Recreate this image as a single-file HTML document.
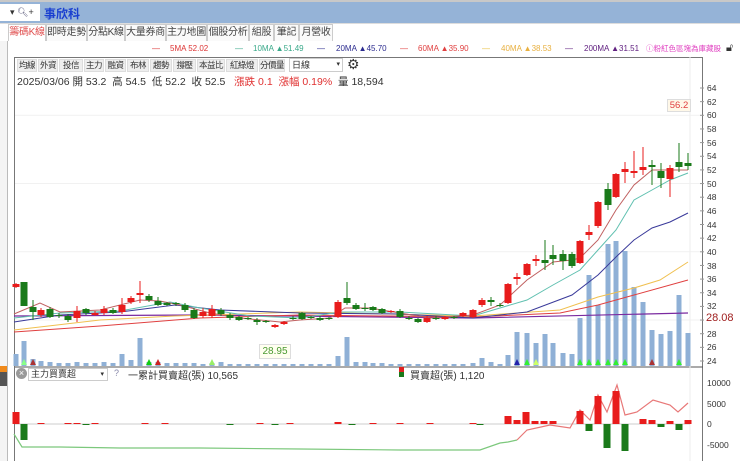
<!DOCTYPE html>
<html><head><meta charset="utf-8"><style>
*{margin:0;padding:0;box-sizing:border-box}
body{width:740px;height:461px;overflow:hidden;background:#fff;font-family:"Liberation Sans","Noto Sans CJK TC",sans-serif;position:relative;font-size:11px;color:#333}
.abs{position:absolute;white-space:nowrap}
.tab{position:absolute;top:24px;height:17px;border:1px solid #ccc;border-bottom:none;background:#fafafa;font-size:10px;line-height:16px;text-align:center;color:#444;white-space:nowrap;overflow:hidden;letter-spacing:-0.3px}
.btn{position:absolute;top:59px;height:13px;background:#eee;border:1px solid #ddd;font-size:8.5px;line-height:11px;text-align:center;color:#333;white-space:nowrap;overflow:hidden;letter-spacing:-0.5px}
.ax{position:absolute;left:707px;font-size:8.5px;color:#333}
.lg{position:absolute;top:44px;font-size:8px;white-space:nowrap}
</style></head><body>
<div class="abs" style="left:0;top:0;width:740px;height:2px;background:#c8c8c8"></div>
<div class="abs" style="left:0;top:2px;width:740px;height:21px;background:#95b3d7"></div>
<div class="abs" style="left:0;top:4px;width:40px;height:17px;background:#fff;font-size:9px;line-height:17px;padding-left:10px">▾ <span style="color:#557">🔍︎</span>+</div>
<div class="abs" style="left:44px;top:5px;font-size:12px;font-weight:bold;color:#1a3fd0">事欣科</div>
<div class="abs" style="left:0;top:23px;width:740px;height:1px;background:#ddd"></div>
<div class="tab" style="left:8px;width:38px;color:#e05050;background:#fff">籌碼K線</div>
<div class="tab" style="left:46px;width:41px">即時走勢</div>
<div class="tab" style="left:87px;width:38px">分點K線</div>
<div class="tab" style="left:125px;width:41px">大量券商</div>
<div class="tab" style="left:166px;width:41px">主力地圖</div>
<div class="tab" style="left:207px;width:42px">個股分析</div>
<div class="tab" style="left:249px;width:25px">組股</div>
<div class="tab" style="left:274px;width:25px">筆記</div>
<div class="tab" style="left:299px;width:34px">月營收</div>
<div class="abs" style="left:0;top:41px;width:8px;height:420px;border-right:1px solid #bbb;background:#f4f4f4"></div>
<div class="abs" style="left:0;top:366px;width:7px;height:6px;background:#f08a1c"></div>
<div class="abs" style="left:0;top:372px;width:7px;height:14px;background:#555"></div>
<div class="lg" style="left:152px;color:#d33">—</div><div class="lg" style="left:170px;color:#d33">5MA 52.02</div>
<div class="lg" style="left:235px;color:#3aa98a">—</div><div class="lg" style="left:253px;color:#3aa98a">10MA ▲51.49</div>
<div class="lg" style="left:317px;color:#2b2b8f">—</div><div class="lg" style="left:336px;color:#2b2b8f">20MA ▲45.70</div>
<div class="lg" style="left:400px;color:#e04040">—</div><div class="lg" style="left:418px;color:#e04040">60MA ▲35.90</div>
<div class="lg" style="left:482px;color:#e8c040">—</div><div class="lg" style="left:501px;color:#e8b040">40MA ▲38.53</div>
<div class="lg" style="left:565px;color:#602080">—</div><div class="lg" style="left:584px;color:#602080">200MA ▲31.51</div>
<div class="lg" style="left:646px;top:43px;font-size:7.5px;color:#e040c0">ⓘ粉紅色區塊為庫藏股</div>
<div class="abs" style="top:42px;left:726px;font-size:11px">🔓︎</div>
<div class="abs" style="left:14px;top:57px;width:689px;height:404px;border:1px solid #777;border-bottom:none"></div>
<div class="btn" style="left:17px;width:20px">均線</div>
<div class="btn" style="left:38px;width:20px">外資</div>
<div class="btn" style="left:59px;width:24px">投信</div>
<div class="btn" style="left:84px;width:20px">主力</div>
<div class="btn" style="left:105px;width:21px">融資</div>
<div class="btn" style="left:127px;width:22px">布林</div>
<div class="btn" style="left:150px;width:22px">趨勢</div>
<div class="btn" style="left:173px;width:23px">撐壓</div>
<div class="btn" style="left:197px;width:28px">本益比</div>
<div class="btn" style="left:226px;width:32px">紅綠燈</div>
<div class="btn" style="left:259px;width:26px">分價量</div>
<div class="abs" style="left:289px;top:58px;width:54px;height:14px;border:1px solid #ccc;font-size:9px;line-height:12px;padding-left:2px">日線<span style="float:right;font-size:7px;padding-right:2px">▾</span></div>
<div class="abs" style="left:347px;top:56px;font-size:14px;color:#333">⚙</div>
<div class="abs" style="left:17px;top:74px;font-size:10.5px;white-space:nowrap;color:#333">2025/03/06 開 53.2 &nbsp;高 54.5 &nbsp;低 52.2 &nbsp;收 52.5 &nbsp; <span style="color:#e03030">漲跌 0.1 &nbsp;漲幅 0.19%</span> &nbsp;量 18,594</div>
<svg class="abs" style="left:0;top:0" width="740" height="461" id="sv"></svg>
<div class="abs" style="left:667px;top:99px;width:24px;height:13px;border:1px solid #ddd;background:#fff8e8;color:#e04040;font-size:9.5px;text-align:center;line-height:12px">56.2</div>
<div class="abs" style="left:259px;top:344px;width:32px;height:15px;border:1px solid #ddd;background:#fffff0;color:#4a9a30;font-size:10px;text-align:center;line-height:14px">28.95</div>
<div class="abs" style="left:706px;top:312px;font-size:11px;color:#a02020">28.08</div>
<div class="abs" style="left:16px;top:368px;width:11px;height:11px;border-radius:50%;background:#999;color:#fff;font-size:9px;line-height:11px;text-align:center">×</div>
<div class="abs" style="left:28px;top:368px;width:80px;height:13px;border:1px solid #ccc;font-size:9px;line-height:11px;padding-left:2px">主力買賣超<span style="float:right;font-size:7px;padding-right:3px">▾</span></div>
<div class="abs" style="left:114px;top:368px;font-size:9px;color:#88a">?</div>
<div class="abs" style="left:128px;top:367px;font-size:10px;white-space:nowrap">一累計買賣超(張) 10,565</div>
<div class="abs" style="left:399px;top:367px;width:5px;height:5px;background:#e02020"></div>
<div class="abs" style="left:399px;top:372px;width:5px;height:5px;background:#1a7a1a"></div>
<div class="abs" style="left:410px;top:367px;font-size:10px;white-space:nowrap">買賣超(張) 1,120</div>
<div class="ax" style="top:83px">64</div><div class="ax" style="top:97px">62</div><div class="ax" style="top:110px">60</div><div class="ax" style="top:124px">58</div><div class="ax" style="top:138px">56</div><div class="ax" style="top:151px">54</div><div class="ax" style="top:165px">52</div><div class="ax" style="top:179px">50</div><div class="ax" style="top:192px">48</div><div class="ax" style="top:206px">46</div><div class="ax" style="top:220px">44</div><div class="ax" style="top:233px">42</div><div class="ax" style="top:247px">40</div><div class="ax" style="top:261px">38</div><div class="ax" style="top:274px">36</div><div class="ax" style="top:288px">34</div><div class="ax" style="top:301px">32</div><div class="ax" style="top:329px">28</div><div class="ax" style="top:342px">26</div><div class="ax" style="top:356px">24</div>
<div class="ax" style="top:378px">10000</div><div class="ax" style="top:399px">5000</div><div class="ax" style="top:419px">0</div><div class="ax" style="top:440px">-5000</div>
<script>
var s='';
function L(x1,y1,x2,y2,c,w){s+='<line x1="'+x1+'" y1="'+y1+'" x2="'+x2+'" y2="'+y2+'" stroke="'+c+'" stroke-width="'+(w||1)+'"/>';}
function R(x,y,w,h,c){s+='<rect x="'+x+'" y="'+y+'" width="'+w+'" height="'+Math.max(h,1)+'" fill="'+c+'"/>';}
function P(pts,c,w){s+='<polyline fill="none" stroke="'+c+'" stroke-width="'+(w||1)+'" points="'+pts+'"/>';}
for(var p=24;p<=64;p+=2){var y=88+(64-p)*6.825;if(p%10==0)L(15,y,700,y,'#f1f1f1');L(700,y,704,y,'#999');}
L(15,367,703,367,'#555');
L(690,57,690,461,'#eee');
L(15,424,690,424,'#ccc');
var vol=[[16,354],[24,341],[33,359],[41,361],[50,362],[59,363],[68,363],[77,362],[86,363],[95,363],[104,362],[113,363],[122,354],[131,360],[140,338],[149,362],[158,362],[167,363],[176,363],[185,363],[194,363],[203,364],[212,363],[221,362],[230,364],[239,364],[248,364],[257,364],[266,364],[275,364],[284,364],[293,364],[302,364],[311,364],[320,364],[329,364],[338,356],[347,337],[356,362],[365,362],[373,363],[382,363],[391,364],[400,364],[409,364],[418,364],[427,364],[436,364],[445,364],[454,364],[463,364],[473,363],[482,358],[491,362],[500,364],[508,355],[517,332],[527,333],[536,343],[545,334],[553,343],[563,353],[572,354],[580,318],[589,275],[598,305],[608,244],[616,241],[625,251],[634,287],[643,302],[652,330],[661,334],[670,331],[679,295],[688,333]];
vol.forEach(function(v){R(v[0]-2.5,v[1],5,366-v[1],'#8fb0d6');});
[[24,'#8f8'],[33,'#a33'],[149,'#1c1'],[158,'#c22'],[212,'#9e6'],[517,'#22a'],[527,'#3e3'],[536,'#cf6'],[580,'#3e3'],[589,'#3e3'],[598,'#3e3'],[608,'#3e3'],[616,'#3e3'],[625,'#3e3'],[652,'#a33'],[679,'#3e3']].forEach(function(t){s+='<polygon points="'+(t[0]-3)+',365 '+(t[0]+3)+',365 '+t[0]+',359" fill="'+t[1]+'"/>';});
P('14,316 200,315 473,318 688,313','#7a2aa0',1.2);
P('14,332 100,326 200,318 300,315 473,317 560,313 598,305 634,295 688,280','#e04040');
P('14,330 100,320 175,316 300,312 473,316 560,310 598,297 634,288 660,280 688,262','#f0c050');
P('14,322 60,315 120,312 175,305 220,310 300,313 400,314 473,318 527,312 572,295 598,275 616,257 634,240 652,228 670,222 688,213','#3a3a9a');
P('14,318 60,313 120,311 170,302 200,308 250,316 300,318 340,312 400,312 473,316 527,300 553,285 580,270 598,250 616,230 634,200 652,190 670,180 688,173','#60c0b0');
P('14,314 40,303 60,312 100,310 140,300 160,301 180,305 210,313 240,318 280,322 300,320 330,318 345,308 370,308 400,313 430,318 473,315 500,305 527,280 553,262 572,260 580,258 598,240 616,210 634,185 652,170 670,170 688,170','#c06060');
var G='#1a7a1a',Rd='#e81c1c';
var c=[[16,284,287,283,288,Rd],[24,282,306,282,306,G],[33,307,312,300,320,G],[41,310,315,308,317,Rd],[50,309,317,307,318,G],[59,315,316,313,318,G],[68,316,320,314,322,G],[77,311,318,306,322,Rd],[86,309,313,308,315,G],[95,313,315,311,316,Rd],[104,309,313,306,315,Rd],[113,310,313,308,314,G],[122,305,312,298,314,Rd],[131,298,302,296,304,Rd],[140,293,295,281,303,Rd],[149,296,300,294,302,G],[158,301,305,297,306,G],[167,303,305,302,306,G],[176,303,304,302,306,G],[185,305,310,303,312,G],[194,310,318,308,319,G],[203,312,316,308,318,Rd],[212,309,316,305,318,Rd],[221,310,314,308,316,G],[230,315,318,313,320,G],[239,317,320,316,321,G],[248,318,319,317,320,G],[257,320,322,318,325,G],[266,321,322,320,323,G],[275,325,327,324,328,Rd],[284,322,324,321,325,Rd],[293,318,319,316,320,G],[302,313,319,312,320,G],[311,317,318,316,319,G],[320,318,320,316,321,G],[329,318,319,317,320,G],[338,302,317,300,318,Rd],[347,298,303,282,305,G],[356,305,309,303,310,G],[365,308,309,303,311,G],[373,307,310,306,311,G],[382,309,313,308,314,G],[391,311,312,310,313,Rd],[400,311,317,309,318,G],[409,318,319,316,320,G],[418,319,322,318,323,G],[427,318,322,316,323,Rd],[436,318,319,316,320,G],[445,317,319,316,320,Rd],[454,317,318,316,319,G],[463,313,316,312,317,Rd],[473,310,317,309,318,Rd],[482,300,305,298,307,Rd],[491,300,302,297,306,G],[500,305,306,303,307,G],[508,284,303,283,304,Rd],[517,277,279,273,285,Rd],[527,264,275,263,276,Rd],[536,259,261,255,266,Rd],[545,260,263,240,270,G],[553,255,259,245,265,G],[563,254,261,250,270,G],[572,254,266,252,268,G],[580,241,263,240,264,Rd],[589,232,235,225,240,Rd],[598,202,226,201,228,Rd],[608,189,205,183,210,G],[616,174,197,173,198,Rd],[625,169,172,162,183,Rd],[634,171,173,151,178,Rd],[643,167,170,147,175,Rd],[652,165,167,160,185,G],[661,171,178,163,188,G],[670,168,179,165,197,Rd],[679,162,167,143,172,G],[688,163,166,153,170,G]];
c.forEach(function(k){L(k[0],k[3],k[0],k[4],k[5]);R(k[0]-3.5,k[1],7,k[2]-k[1],k[5]);});
P('14,434 22,447 60,447 120,448 200,448 300,449 400,450 480,450 500,443 508,442 517,440','#7cc87c',1.2);
P('517,440 527,430 550,425 570,428 580,410 590,420 598,395 607,412 617,385 625,415 637,412 653,400 670,405 678,412 688,403','#e87878',1.2);
[[16,412,424,Rd],[24,424,440,G],[41,423,424,Rd],[68,423,424,Rd],[77,423,424,Rd],[86,424,425,G],[95,423,424,Rd],[145,423,424,Rd],[165,423,424,Rd],[230,424,425,G],[260,423,424,Rd],[275,424,425,G],[290,423,424,Rd],[338,422,424,Rd],[352,424,425,G],[373,423,424,Rd],[400,423,424,Rd],[430,423,424,Rd],[473,423,424,Rd],[480,424,425,G],[508,416,424,Rd],[517,420,424,Rd],[526,412,424,Rd],[535,421,424,Rd],[544,421,424,Rd],[553,421,424,Rd],[580,411,424,Rd],[589,424,431,G],[598,396,424,Rd],[607,424,448,G],[616,391,424,Rd],[625,424,451,G],[643,419,424,Rd],[652,420,424,Rd],[661,424,427,G],[670,421,424,Rd],[679,424,430,G],[688,420,424,Rd]].forEach(function(b){R(b[0]-3.5,b[1],7,b[2]-b[1],b[3]);});
document.getElementById('sv').innerHTML=s;
</script>
</body></html>
